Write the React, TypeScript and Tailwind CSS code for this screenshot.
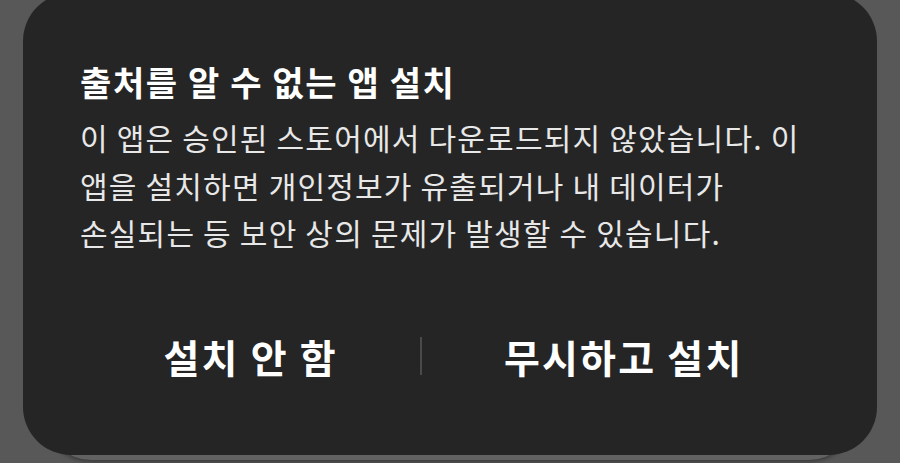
const FONT = { fontFamily: '"Noto Sans CJK KR", "Noto Sans", sans-serif' }

export default function App() {
  return (
    <div className="relative h-[463px] w-[900px] overflow-hidden bg-[#585858]" style={FONT}>
      {/* card behind the dialog */}
      <div className="absolute left-[47px] right-[47px] top-0 bottom-[3px] rounded-b-[44px] bg-[#626262] shadow-[0_2px_4px_rgba(0,0,0,0.35)]" />

      <div className="relative mx-[23px] -mt-[7px] flex h-[462px] flex-col rounded-[48px] bg-[#252525] pl-[57px] pr-[50px] pt-[68px]">
        <h1 className="text-[34px] font-bold leading-[42px] tracking-[1.6px] text-white">출처를 알 수 없는 앱 설치</h1>
        <p className="mt-[11px] break-keep text-[30px] leading-[47.5px] tracking-[1.2px] text-[#e8e8e8]">
          이 앱은 승인된 스토어에서 다운로드되지 않았습니다. 이 앱을 설치하면 개인정보가 유출되거나 내 데이터가 손실되는 등 보안 상의 문제가 발생할 수 있습니다.
        </p>

        <div className="mt-[74px] flex items-center justify-center">
          <button type="button" className="text-[39px] font-bold leading-[50px] tracking-[2.2px] text-white">설치 안 함</button>
          <div className="mx-[82px] h-[38px] w-[2px] bg-[#4a4a4a]" />
          <button type="button" className="text-[39px] font-bold leading-[50px] tracking-[2.2px] text-white">무시하고 설치</button>
        </div>
      </div>
    </div>
  )
}
